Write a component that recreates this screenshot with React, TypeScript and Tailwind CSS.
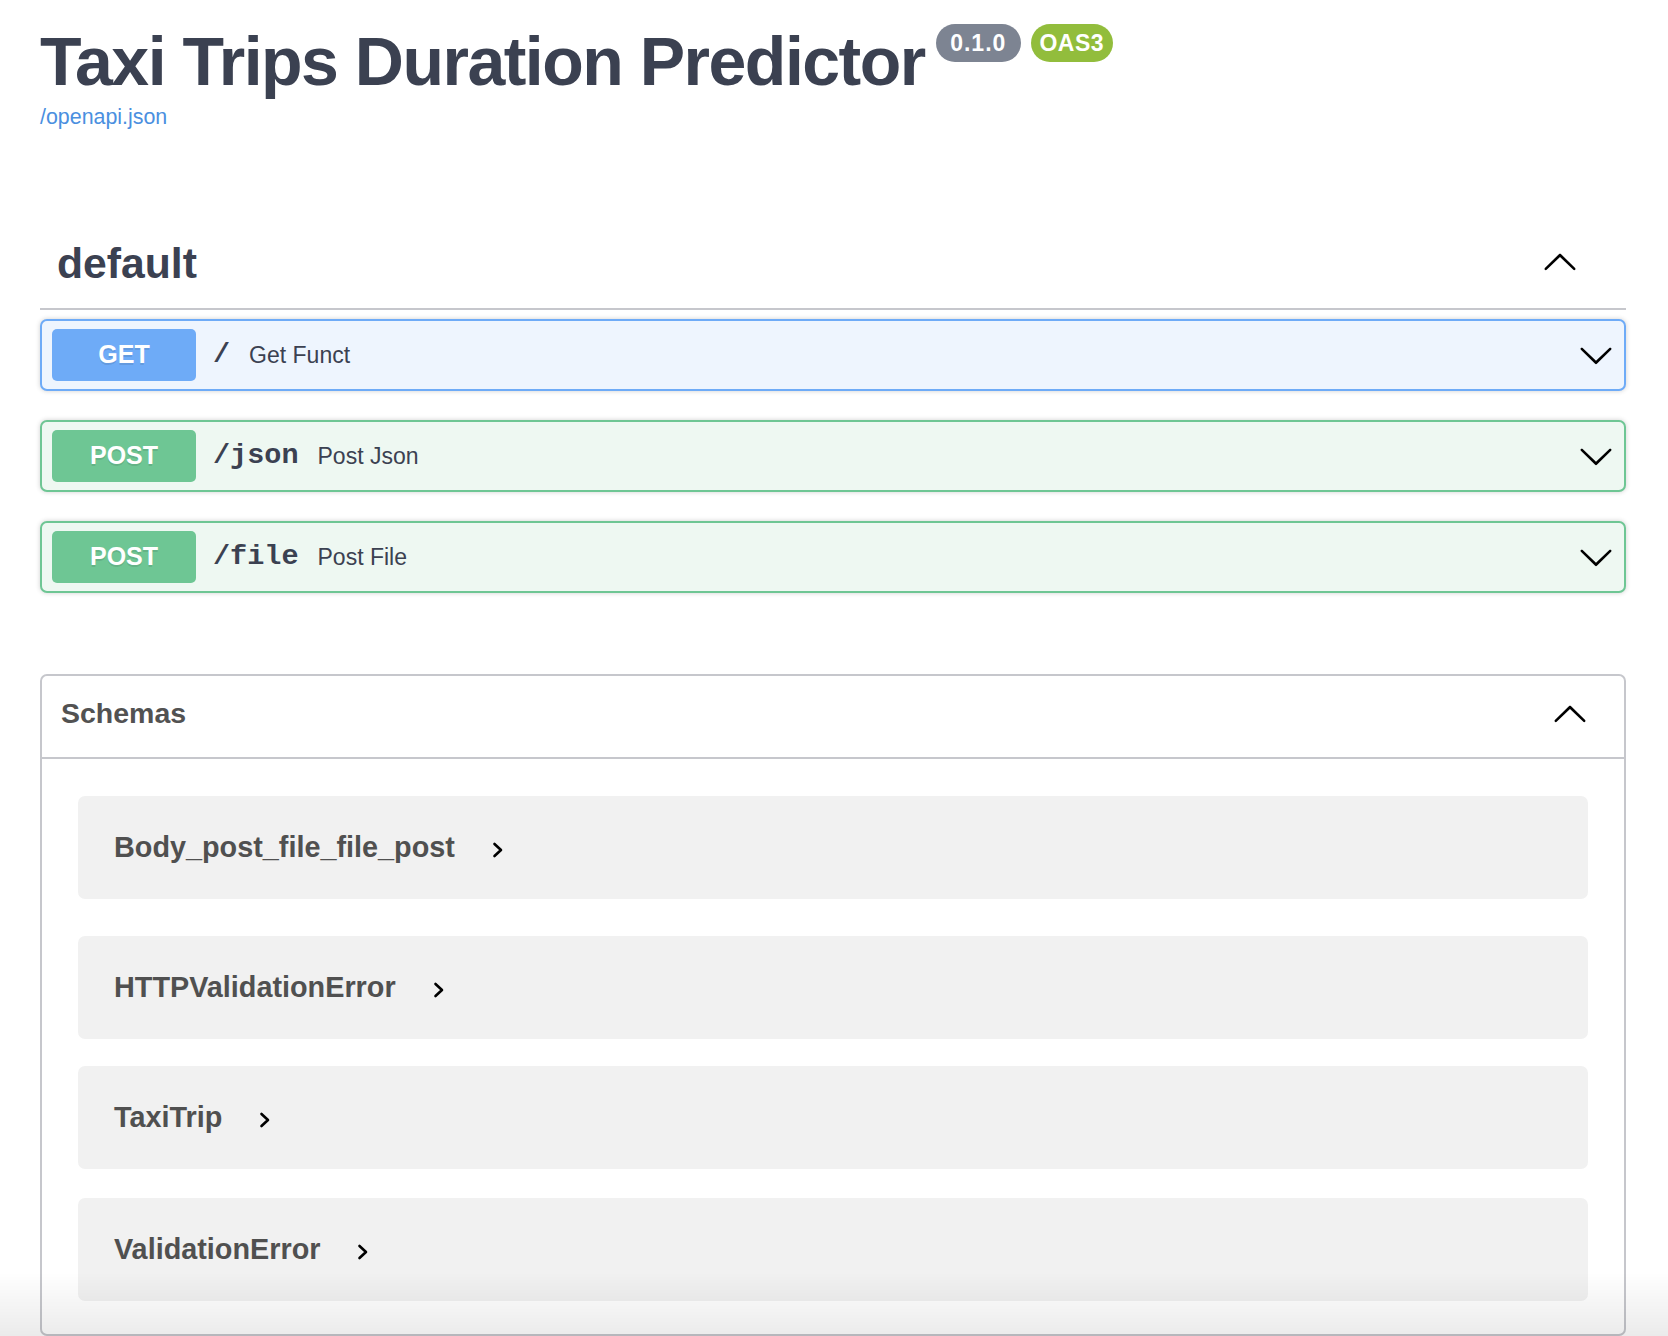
import React from 'react'

const SANS = "font-['Liberation_Sans',Arial,sans-serif]"

function ArrowDown() {
  return (
    <svg viewBox="0 0 20 20" className="w-[36px] h-[36px] shrink-0" fill="#000">
      <path d="M17.418 6.109c.272-.268.709-.268.979 0s.271.701 0 .969l-7.908 7.83c-.27.268-.707.268-.979 0l-7.908-7.83c-.27-.268-.27-.701 0-.969.271-.268.709-.268.979 0L10 13.25l7.418-7.141z" />
    </svg>
  )
}

function ArrowUp() {
  return (
    <svg viewBox="0 0 20 20" className="w-[36px] h-[36px] shrink-0" fill="#000">
      <path d="M17.418 14.908c.272.268.709.268.979 0s.271-.701 0-.969l-7.908-7.83c-.27-.268-.707-.268-.979 0l-7.908 7.83c-.27.268-.27.701 0 .969.271.268.709.268.979 0L10 7.767l7.418 7.141z" />
    </svg>
  )
}

function SmallChevron() {
  return (
    <svg viewBox="0 0 12 16" className="w-[12px] h-[16px] shrink-0" fill="none" stroke="#000" strokeWidth="2.6" strokeLinecap="round" strokeLinejoin="round">
      <path d="M2.5 2 L9 8 L2.5 14" />
    </svg>
  )
}

type Op = {
  method: 'GET' | 'POST'
  path: string
  summary: string
}

const ops: Op[] = [
  { method: 'GET', path: '/', summary: 'Get Funct' },
  { method: 'POST', path: '/json', summary: 'Post Json' },
  { method: 'POST', path: '/file', summary: 'Post File' },
]

function OpBlock({ op, last }: { op: Op; last: boolean }) {
  const isGet = op.method === 'GET'
  return (
    <div
      className={`flex items-center h-[72px] px-[10px] rounded-[7px] border-2 shadow-[0_0_5px_rgba(0,0,0,0.19)] ${
        isGet ? 'border-[#6eabf7] bg-[#eef5fe]' : 'border-[#6ec694] bg-[#eef8f2]'
      } ${last ? '' : 'mb-[29px]'}`}
    >
      <div
        className={`w-[144px] h-[52px] rounded-[5px] flex items-center justify-center text-white font-bold text-[25px] [text-shadow:0_2px_0_rgba(0,0,0,0.1)] ${
          isGet ? 'bg-[#6eabf7]' : 'bg-[#6ec694]'
        }`}
      >
        {op.method}
      </div>
      <span className="ml-[17px] pr-[19px] font-['Liberation_Mono','Courier_New',monospace] font-bold text-[28.5px] text-[#3b4151]">
        {op.path}
      </span>
      <span className="text-[23px] text-[#3b4151]">{op.summary}</span>
      <div className="flex-1" />
      <ArrowDown />
    </div>
  )
}

const schemas = [
  { name: 'Body_post_file_file_post', mb: 'mb-[37px]' },
  { name: 'HTTPValidationError', mb: 'mb-[27px]' },
  { name: 'TaxiTrip', mb: 'mb-[29px]' },
  { name: 'ValidationError', mb: '' },
]

export default function App() {
  return (
    <div className={`${SANS} bg-white min-h-screen pl-[40px] pr-[42px] relative`}>
      {/* info */}
      <div className="pt-[24px] flex items-start">
        <h2 className="mt-[3px] text-[68px] leading-[68px] font-bold tracking-[-1.5px] text-[#3b4151]">
          Taxi Trips Duration Predictor
        </h2>
        <span className="ml-[11px] w-[85px] h-[38px] rounded-full bg-[#7d8492] text-white font-bold text-[23px] tracking-[1px] flex items-center justify-center">
          0.1.0
        </span>
        <span className="ml-[10px] w-[82px] h-[38px] rounded-full bg-[#92bd3c] text-white font-bold text-[23px] tracking-[0.5px] flex items-center justify-center">
          OAS3
        </span>
      </div>
      <a className="block mt-[10px] text-[21.4px] leading-[24px] text-[#4a8fe0]">/openapi.json</a>

      {/* default tag */}
      <div className="mt-[109px] flex items-center pl-[17px] pr-[48px] pb-[20px] border-b-2 border-[#c6c7cc]">
        <h3 className="text-[42.7px] leading-[50px] font-bold text-[#3b4151]">default</h3>
        <div className="flex-1" />
        <div className="mb-[4px]">
          <ArrowUp />
        </div>
      </div>
      <div className="mt-[9px]">
        {ops.map((op, i) => (
          <OpBlock key={op.path} op={op} last={i === ops.length - 1} />
        ))}
      </div>

      {/* schemas */}
      <section className="mt-[81px] border-2 border-[#c6c7cc] rounded-[7px]">
        <div className="h-[83px] flex items-center pl-[19px] pr-[36px] pb-[8px] border-b-2 border-[#c6c7cc]">
          <h4 className="text-[28.5px] leading-[34px] font-bold text-[#525252]">Schemas</h4>
          <div className="flex-1" />
          <ArrowUp />
        </div>
        <div className="px-[36px] pt-[37px] pb-[33px]">
          {schemas.map((s) => (
            <div
              key={s.name}
              className={`h-[103px] rounded-[7px] bg-[#f1f1f1] flex items-center pl-[36px] ${s.mb}`}
            >
              <span className="text-[28.8px] font-bold text-[#505050]">{s.name}</span>
              <span className="ml-[37px] mt-[4px]">
                <SmallChevron />
              </span>
            </div>
          ))}
        </div>
      </section>

      {/* bottom fade */}
      <div className="pointer-events-none fixed bottom-0 inset-x-0 h-[64px] bg-linear-to-b from-transparent to-[rgba(0,0,0,0.08)]" />
    </div>
  )
}
